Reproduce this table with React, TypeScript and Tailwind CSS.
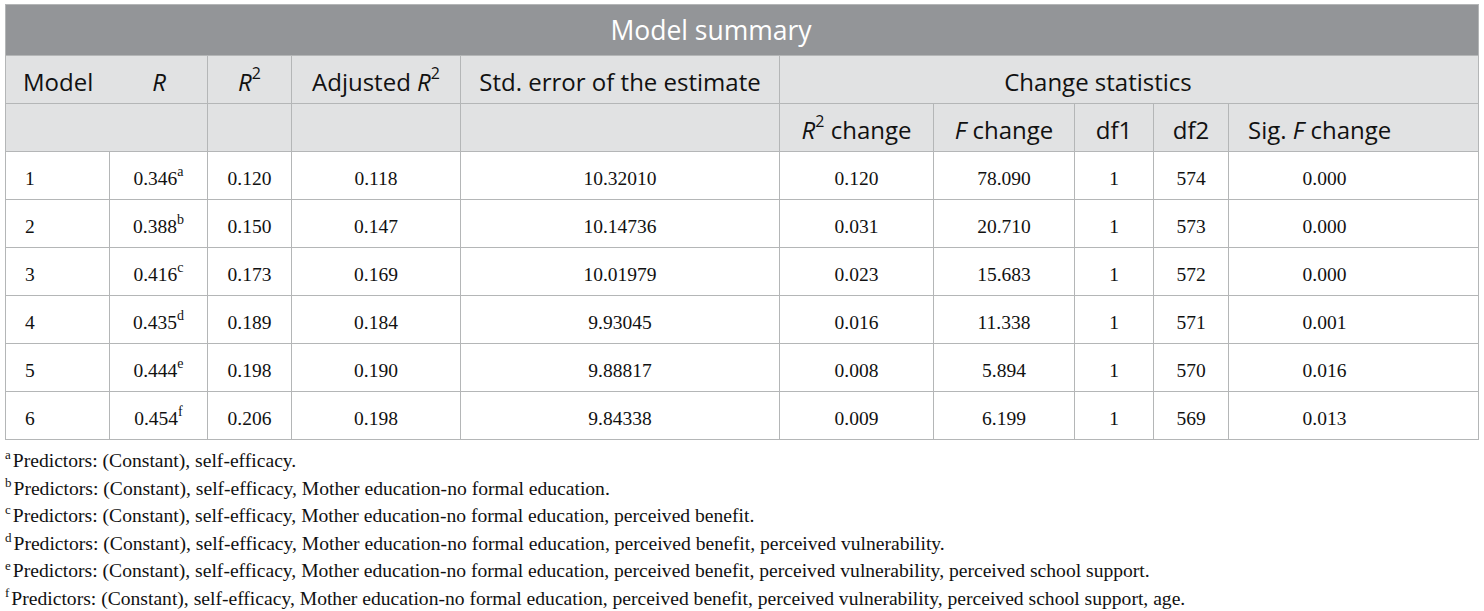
const rows = [
  { m: "1", r: "0.346", s: "a", r2: "0.120", adj: "0.118", se: "10.32010", ch: "0.120", f: "78.090", df1: "1", df2: "574", sig: "0.000" },
  { m: "2", r: "0.388", s: "b", r2: "0.150", adj: "0.147", se: "10.14736", ch: "0.031", f: "20.710", df1: "1", df2: "573", sig: "0.000" },
  { m: "3", r: "0.416", s: "c", r2: "0.173", adj: "0.169", se: "10.01979", ch: "0.023", f: "15.683", df1: "1", df2: "572", sig: "0.000" },
  { m: "4", r: "0.435", s: "d", r2: "0.189", adj: "0.184", se: "9.93045", ch: "0.016", f: "11.338", df1: "1", df2: "571", sig: "0.001" },
  { m: "5", r: "0.444", s: "e", r2: "0.198", adj: "0.190", se: "9.88817", ch: "0.008", f: "5.894", df1: "1", df2: "570", sig: "0.016" },
  { m: "6", r: "0.454", s: "f", r2: "0.206", adj: "0.198", se: "9.84338", ch: "0.009", f: "6.199", df1: "1", df2: "569", sig: "0.013" },
];

const base = "Predictors: (Constant), self-efficacy";
const notes = [
  { k: "a", t: base + "." },
  { k: "b", t: base + ", Mother education-no formal education." },
  { k: "c", t: base + ", Mother education-no formal education, perceived benefit." },
  { k: "d", t: base + ", Mother education-no formal education, perceived benefit, perceived vulnerability." },
  { k: "e", t: base + ", Mother education-no formal education, perceived benefit, perceived vulnerability, perceived school support." },
  { k: "f", t: base + ", Mother education-no formal education, perceived benefit, perceived vulnerability, perceived school support, age." },
];

const sans = "font-['Open_Sans',sans-serif]";
const serif = "font-['Liberation_Serif',serif]";
const line = "border border-[#b4b6b7]";

function Sq() {
  return <sup className="top-[-0.7em] text-[16px] not-italic">2</sup>;
}

export default function App() {
  return (
    <div className="min-h-[611px] w-[1484px] bg-white pl-[5px] pt-[4px] text-[#111]">
      <table className="w-[1473px] table-fixed border-collapse border border-[#b4b6b7]">
        <colgroup>
          <col className="w-[104px]" />
          <col className="w-[98px]" />
          <col className="w-[84px]" />
          <col className="w-[169px]" />
          <col className="w-[319px]" />
          <col className="w-[154px]" />
          <col className="w-[141px]" />
          <col className="w-[79px]" />
          <col className="w-[75px]" />
          <col className="w-[250px]" />
        </colgroup>
        <thead className={sans}>
          <tr className="h-[51px] bg-[#939598]">
            <th colSpan={10} className={`${line} pr-[62px] pt-[2px] text-center text-[26.5px] font-normal text-white`}>
              Model summary
            </th>
          </tr>
          <tr className="h-[48px] bg-[#e1e2e3] text-[24px]">
            <th colSpan={2} className={`${line} p-0 pt-[4px] font-normal`}>
              <div className="grid grid-cols-[104px_98px]">
                <span className="pl-[17px] text-left">Model</span>
                <span className="text-center italic">R</span>
              </div>
            </th>
            <th className={`${line} pt-[4px] text-center font-normal`}>
              <i>R</i>
              <Sq />
            </th>
            <th className={`${line} pt-[4px] text-center font-normal`}>
              Adjusted <i>R</i>
              <Sq />
            </th>
            <th className={`${line} pt-[4px] text-center font-normal`}>Std. error of the estimate</th>
            <th colSpan={5} className={`${line} pr-[62px] pt-[4px] text-center font-normal`}>
              Change statistics
            </th>
          </tr>
          <tr className="h-[48px] bg-[#e1e2e3] text-[24px]">
            <th colSpan={2} className={line} />
            <th className={line} />
            <th className={line} />
            <th className={line} />
            <th className={`${line} pt-[4px] text-center font-normal`}>
              <i>R</i>
              <Sq /> change
            </th>
            <th className={`${line} pt-[4px] text-center font-normal`}>
              <i>F</i> change
            </th>
            <th className={`${line} pt-[4px] text-center font-normal`}>df1</th>
            <th className={`${line} pt-[4px] text-center font-normal`}>df2</th>
            <th className={`${line} pl-[19px] pt-[4px] text-left font-normal`}>
              Sig. <i>F</i> change
            </th>
          </tr>
        </thead>
        <tbody className={`${serif} text-[19.5px]`}>
          {rows.map((r) => (
            <tr key={r.m} className="h-[48px]">
              <td className={`${line} pl-[19px] pt-[6px]`}>{r.m}</td>
              <td className={`${line} pt-[6px] text-center`}>
                {r.r}
                <sup className="top-[-0.6em] text-[14px]">{r.s}</sup>
              </td>
              <td className={`${line} pt-[6px] text-center`}>{r.r2}</td>
              <td className={`${line} pt-[6px] text-center`}>{r.adj}</td>
              <td className={`${line} pt-[6px] text-center`}>{r.se}</td>
              <td className={`${line} pt-[6px] text-center`}>{r.ch}</td>
              <td className={`${line} pt-[6px] text-center`}>{r.f}</td>
              <td className={`${line} pt-[6px] text-center`}>{r.df1}</td>
              <td className={`${line} pt-[6px] text-center`}>{r.df2}</td>
              <td className={`${line} pr-[58px] pt-[6px] text-center`}>{r.sig}</td>
            </tr>
          ))}
        </tbody>
      </table>
      <div className={`${serif} mt-[7px] text-[19.6px] leading-[27.6px]`}>
        {notes.map((n) => (
          <p key={n.k}>
            <sup className="top-[-0.6em] pr-[2px] text-[13px]">{n.k}</sup>
            {n.t}
          </p>
        ))}
      </div>
    </div>
  );
}
